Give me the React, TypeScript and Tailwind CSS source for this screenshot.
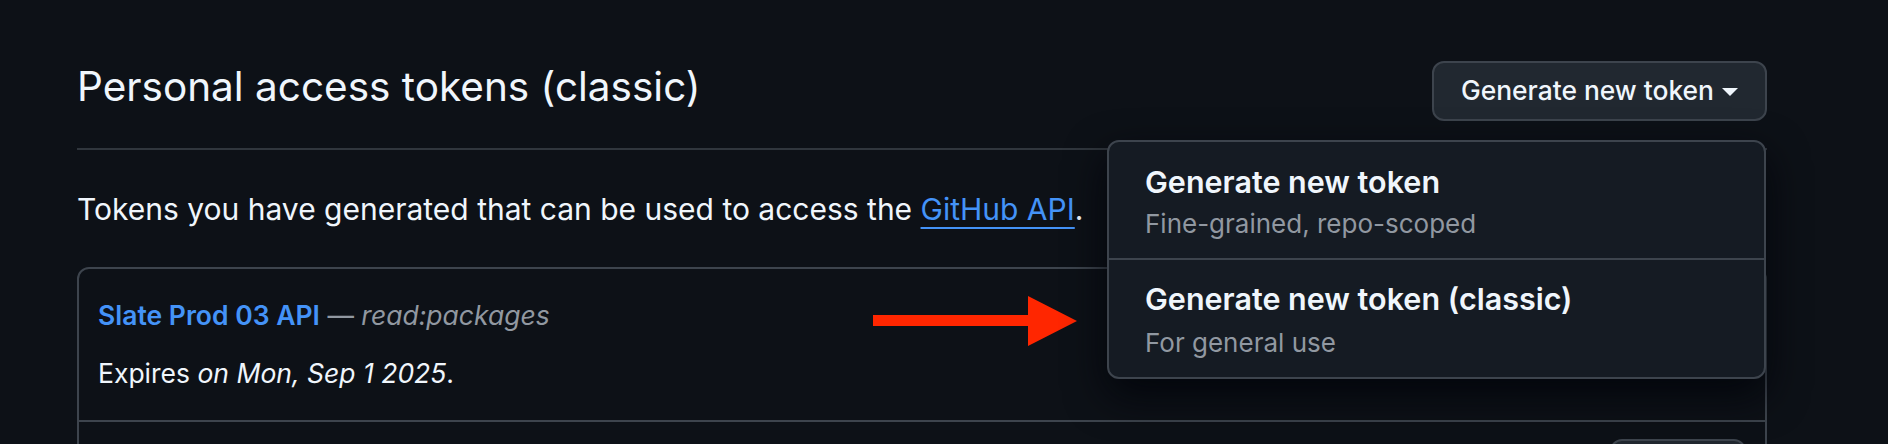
import React from "react";

const DropdownItem = ({
  title,
  subtitle,
  className
}: {
  title: string;
  subtitle: string;
  className?: string;
}) => {
  return (
    <div className={"flex flex-col px-[36px] " + (className || "")}>
      <div className="text-[30.5px] leading-[38px] font-semibold text-[#f0f6fc]">{title}</div>
      <div className="text-[26px] leading-[32px] text-[#9198a1]">{subtitle}</div>
    </div>
  );
};

const App = () => {
  return (
    <div
      className="relative h-[444px] w-[1888px] overflow-hidden bg-[#0d1117] text-[#f0f6fc]"
      style={{ fontFamily: "Inter, 'Noto Sans', sans-serif" }}
    >
      <div className="w-[1767px] pl-[77px] pt-[61px]">
        {/* header */}
        <div className="flex items-start justify-between border-b-2 border-[#30363d] pb-[27px]">
          <h1 className="mt-[2px] text-[40.5px] leading-[48px] font-normal">
            Personal access tokens (classic)
          </h1>
          <button className="flex h-[60px] w-[335px] items-center justify-center gap-[8px] rounded-[12px] border-2 border-[#3d444d] bg-[#212830] text-[26.4px] font-medium text-[#f0f6fc]">
            Generate new token
            <svg width="16" height="8" viewBox="0 0 16 8" className="mt-[2px]">
              <path d="M0 0h16L8 8z" fill="#f0f6fc" />
            </svg>
          </button>
        </div>

        <p className="mt-[39px] text-[30px] leading-[40px]">
          Tokens you have generated that can be used to access the{" "}
          <a className="text-[#4493f8] underline decoration-2 underline-offset-[7px]">GitHub API</a>.
        </p>

        {/* token list */}
        <div className="mt-[38px] rounded-t-[12px] border-2 border-[#3d444d]">
          <div className="border-b-2 border-[#3d444d] px-[19px] pt-[28px] pb-[29px]">
            <div className="text-[26.5px] leading-[36px]">
              <span className="font-semibold text-[#4493f8]">Slate Prod 03 API</span>
              <span className="text-[#9198a1]"> — </span>
              <em className="text-[#9198a1]">read:packages</em>
            </div>
            <div className="mt-[22px] text-[26.5px] leading-[36px]">
              Expires <em>on Mon, Sep 1 2025</em>.
            </div>
          </div>
          <div className="flex justify-end px-[19px] pt-[17px] pb-[40px]">
            <div className="h-[60px] w-[136px] rounded-[12px] border-2 border-[#3d444d] bg-[#212830]" />
          </div>
        </div>
      </div>

      {/* red arrow annotation */}
      <svg
        width="204"
        height="50"
        viewBox="0 0 204 50"
        className="absolute left-[873px] top-[296px]"
      >
        <path d="M0 19h155V0l49 25-49 25V30H0z" fill="#ff2600" />
      </svg>

      {/* open menu */}
      <div className="absolute left-[1107px] top-[140px] w-[659px] overflow-hidden rounded-[12px] border-2 border-[#3d444d] bg-[#151b23] shadow-[0_16px_40px_rgba(1,4,9,0.85)]">
        <DropdownItem
          title="Generate new token"
          subtitle="Fine-grained, repo-scoped"
          className="gap-[7px] border-b-2 border-[#3d444d] pt-[21px] pb-[18px]"
        />
        <DropdownItem
          title="Generate new token (classic)"
          subtitle="For general use"
          className="gap-[9px] pt-[20px] pb-[18px]"
        />
      </div>
    </div>
  );
};

export default App;
